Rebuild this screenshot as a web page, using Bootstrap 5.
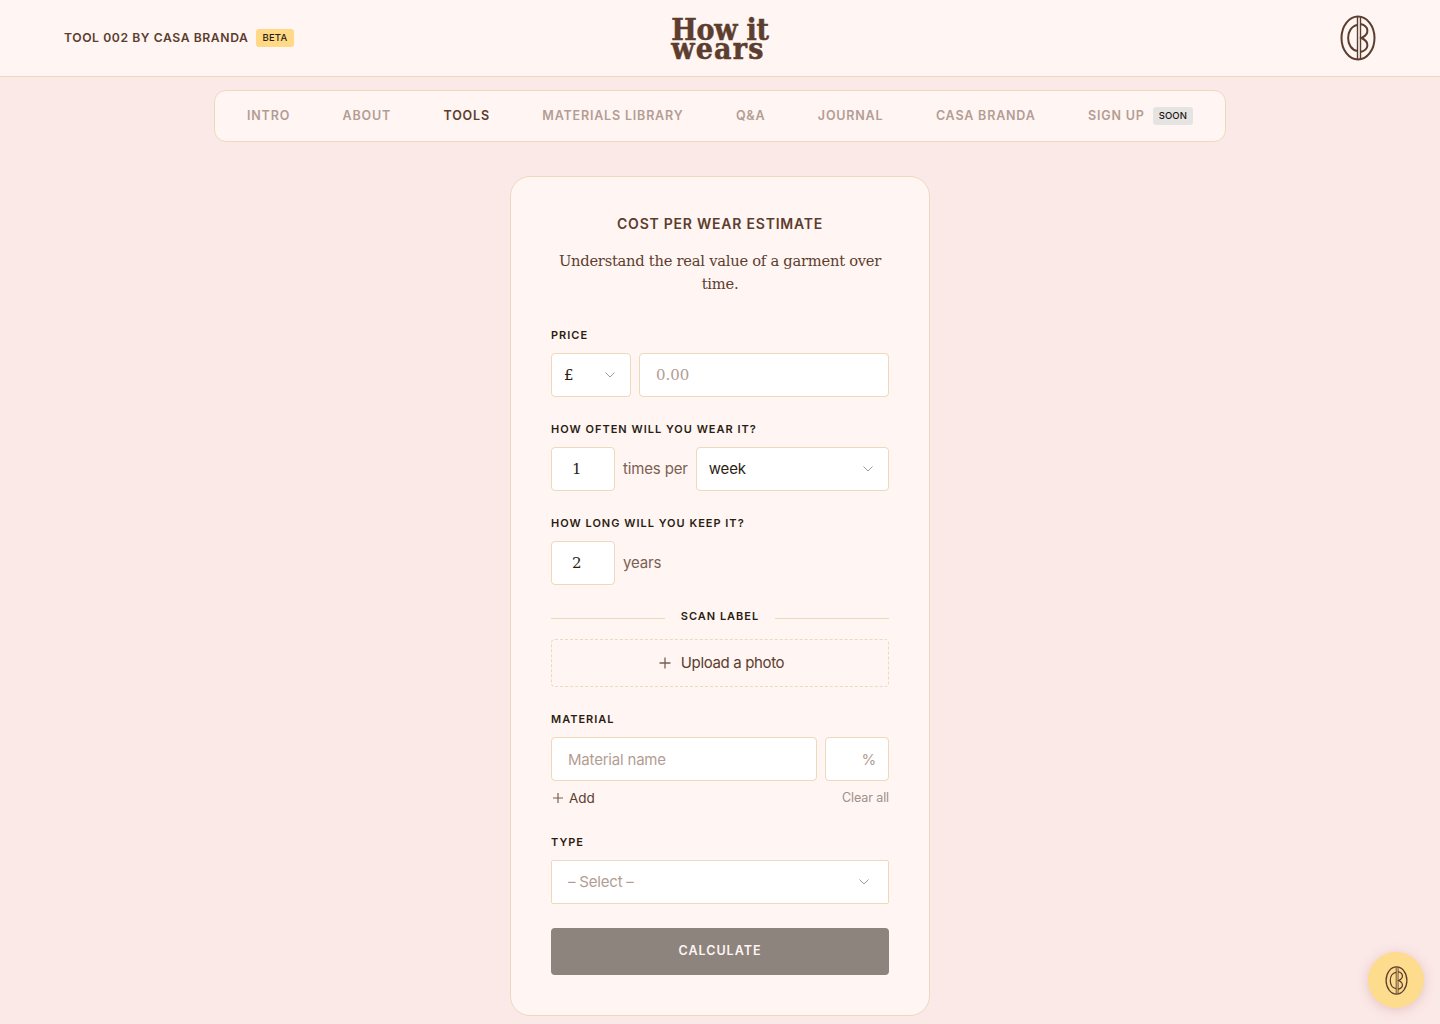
<!DOCTYPE html>
<html lang="en">
<head>
  <meta charset="UTF-8" />
  <meta name="viewport" content="width=device-width, initial-scale=1" />
  <title>How it wears</title>
  <link href="https://cdn.jsdelivr.net/npm/bootstrap@5.3.0/dist/css/bootstrap.min.css" rel="stylesheet" />
  <style>
    body { background: #fbe9e7; color: #5c3d2e; font-family: Inter, "Liberation Sans", sans-serif; }
    .site-top { height: 77px; background: #fff5f3; border-bottom: 1px solid #edd9bd; padding: 0 64px; display: grid; grid-template-columns: 1fr auto 1fr; align-items: center; }
    .tool-name { font-size: 12.2px; font-weight: 600; letter-spacing: .57px; }
    .beta-tag { background: #ffd986; color: #2b1d12; font-size: 9.5px; font-weight: 500; padding: 4px 7px 4px 6px; border-radius: 3px; line-height: 10px; margin-left: 8px; letter-spacing: .2px; }
    .logo-text { font-family: "DejaVu Serif", serif; font-stretch: condensed; font-weight: 700; font-size: 30px; line-height: 19px; text-align: left; margin-top: 2px; letter-spacing: -.25px; -webkit-text-stroke: .5px #5c3d2e; }
    .logo-text span { display: block; }
    .logo-wears { letter-spacing: 1.2px; }
    .menu-bar { width: 1012px; height: 52px; margin: 13px auto 0; padding: 0 32px; background: #fff5f3; border: 1px solid #edd9bd; border-radius: 12px; }
    .menu-bar .nav-link { padding: 0; color: #b39d93; font-size: 12.5px; font-weight: 600; letter-spacing: .82px; }
    .menu-bar .nav-link.active { color: #5c3d2e; }
    .soon-tag { background: #e6e4e2; color: #1c1410; font-size: 9.5px; font-weight: 500; padding: 4px 6px; border-radius: 3px; line-height: 10px; margin-left: 8px; letter-spacing: .1px; }
    .tool-box { width: 420px; height: 840px; margin: 34px auto 8px; padding: 40px; background: #fff5f3; border: 1px solid #edd9bd; border-radius: 20px; }
    .tool-title { font-size: 14px; font-weight: 600; letter-spacing: .77px; line-height: 17px; margin: -2px 0 17px; text-align: center; }
    .tool-intro { font-family: "DejaVu Serif", serif; font-size: 14.7px; line-height: 23px; letter-spacing: -.25px; text-align: center; margin: 0 0 33px; }
    .field-label { display: block; font-size: 11px; font-weight: 600; letter-spacing: 1px; line-height: 14px; color: #2b1d12; margin: 0 0 11px; }
    .field-block { margin-bottom: 25px; }
    .form-control, .form-select { height: 44px; border: 1px solid #edd9bd; border-radius: 4px; font-size: 15px; letter-spacing: -.2px; color: #2b1d12; padding: 0 16px; box-shadow: none; }
    .form-control::placeholder { color: #b39d93; opacity: 1; }
    .form-select { background-image: url("data:image/svg+xml,%3csvg xmlns='http://www.w3.org/2000/svg' viewBox='0 0 10 6'%3e%3cpath fill='none' stroke='%23a6978e' d='M.5.5 5 5 9.5.5'/%3e%3c/svg%3e"); background-size: 10px 6px; background-position: right 15px center; }
    .serif-num { font-family: "DejaVu Serif", serif; font-size: 15px; letter-spacing: 0; }
    .w-currency { width: 80px; flex: none; padding-left: 12px; }
    .w-small { width: 64px; flex: none; padding-left: 20px; }
    .unit-text { font-size: 15px; letter-spacing: -.15px; color: #7b5f52; }
    .week-select { flex: 1 1 0; width: auto; min-width: 0; padding-left: 12px; }
    .scan-rule { margin: -1px 0 16px; font-size: 11px; font-weight: 600; letter-spacing: 1px; line-height: 14px; color: #2b1d12; gap: 16px; }
    .scan-rule::before, .scan-rule::after { content: ""; flex: 1; border-top: 1px solid #edd9bd; margin-top: 4px; }
    .upload-box { height: 48px; border: 1px dashed #edd9bd; border-radius: 4px; font-size: 15px; letter-spacing: -.35px; gap: 10px; margin-bottom: 25px; padding-left: 3px; }
    .pct-input { width: 64px; flex: none; text-align: right; padding: 0 12px; }
    .add-row { margin: 8px 0 28px; height: 18px; font-size: 13.5px; }
    .add-link { gap: 6px; padding-left: 2px; }
    .clear-link { color: #a09087; font-size: 12.5px; letter-spacing: -.1px; }
    .type-select { color: #b39d93; padding-left: 16px; border-radius: 2px; background-position: right 19px center; }
    .calc-btn { height: 47px; width: 100%; margin-top: 24px; background: #8e847e; border: 0; border-radius: 4px; color: #fff5f3; font-size: 12.5px; font-weight: 600; letter-spacing: 1px; }
    .help-fab { position: fixed; right: 16px; bottom: 16px; width: 56px; height: 56px; background: #fddc8d; border-radius: 50%; box-shadow: 0 2px 12px rgba(180, 110, 110, .3); }
  </style>
</head>
<body>

  <svg width="0" height="0" class="position-absolute">
    <symbol id="cb-mark" viewBox="0 0 36 46">
      <g fill="none" stroke="currentColor" stroke-width="2">
        <ellipse cx="18" cy="23" rx="16.5" ry="21.5" />
        <path d="M17.5 2v42M20.5 2v42" stroke-width="1.4" />
        <path d="M17.5 10C5 12 5 34 17.5 36" />
        <path d="M20.5 9C29 11 30 19 21.5 23C30 27 29 35 20.5 37" />
      </g>
    </symbol>
  </svg>

  <!-- Top bar -->
  <header class="site-top">
    <div class="d-flex align-items-center">
      <span class="tool-name">TOOL 002 BY CASA BRANDA</span>
      <span class="beta-tag">BETA</span>
    </div>
    <div class="logo-text"><span>How it</span><span class="logo-wears">wears</span></div>
    <div class="d-flex justify-content-end">
      <svg width="36" height="46"><use href="#cb-mark" /></svg>
    </div>
  </header>

  <!-- Section menu -->
  <nav class="nav menu-bar justify-content-between align-items-center">
    <a class="nav-link" href="#">INTRO</a>
    <a class="nav-link" href="#">ABOUT</a>
    <a class="nav-link active" href="#">TOOLS</a>
    <a class="nav-link" href="#">MATERIALS LIBRARY</a>
    <a class="nav-link" href="#">Q&amp;A</a>
    <a class="nav-link" href="#">JOURNAL</a>
    <a class="nav-link" href="#">CASA BRANDA</a>
    <a class="nav-link d-flex align-items-center" href="#">SIGN UP <span class="soon-tag">SOON</span></a>
  </nav>

  <!-- Estimate form -->
  <main class="tool-box">
    <h1 class="tool-title">COST PER WEAR ESTIMATE</h1>
    <p class="tool-intro">Understand the real value of a garment over time.</p>

    <form>
      <div class="field-block">
        <label class="field-label">PRICE</label>
        <div class="d-flex gap-2">
          <select class="form-select serif-num w-currency"><option>£</option></select>
          <input class="form-control serif-num" type="text" placeholder="0.00" />
        </div>
      </div>

      <div class="field-block">
        <label class="field-label">HOW OFTEN WILL YOU WEAR IT?</label>
        <div class="d-flex gap-2 align-items-center">
          <input class="form-control serif-num w-small" type="text" value="1" />
          <span class="unit-text">times per</span>
          <select class="form-select week-select"><option>week</option></select>
        </div>
      </div>

      <div class="field-block">
        <label class="field-label">HOW LONG WILL YOU KEEP IT?</label>
        <div class="d-flex gap-2 align-items-center">
          <input class="form-control serif-num w-small" type="text" value="2" />
          <span class="unit-text">years</span>
        </div>
      </div>

      <div class="scan-rule d-flex align-items-center">SCAN LABEL</div>
      <div class="upload-box d-flex align-items-center justify-content-center">
        <svg width="12" height="12" viewBox="0 0 12 12"><path d="M6 .5v11M.5 6h11" stroke="#7b5f52" stroke-width="1.3" /></svg>
        <span>Upload a photo</span>
      </div>

      <label class="field-label">MATERIAL</label>
      <div class="d-flex gap-2">
        <input class="form-control" type="text" placeholder="Material name" />
        <input class="form-control pct-input" type="text" placeholder="%" />
      </div>
      <div class="add-row d-flex justify-content-between align-items-center">
        <span class="add-link d-flex align-items-center">
          <svg width="10" height="10" viewBox="0 0 10 10"><path d="M5 0v10M0 5h10" stroke="#7b5f52" stroke-width="1.2" /></svg>
          <span>Add</span>
        </span>
        <span class="clear-link">Clear all</span>
      </div>

      <label class="field-label">TYPE</label>
      <select class="form-select type-select"><option>– Select –</option></select>

      <button class="btn calc-btn" type="button">CALCULATE</button>
    </form>
  </main>

  <div class="help-fab d-flex align-items-center justify-content-center">
    <svg width="23" height="29"><use href="#cb-mark" /></svg>
  </div>

  <script src="https://cdn.jsdelivr.net/npm/bootstrap@5.3.0/dist/js/bootstrap.bundle.min.js"></script>
</body>
</html>
